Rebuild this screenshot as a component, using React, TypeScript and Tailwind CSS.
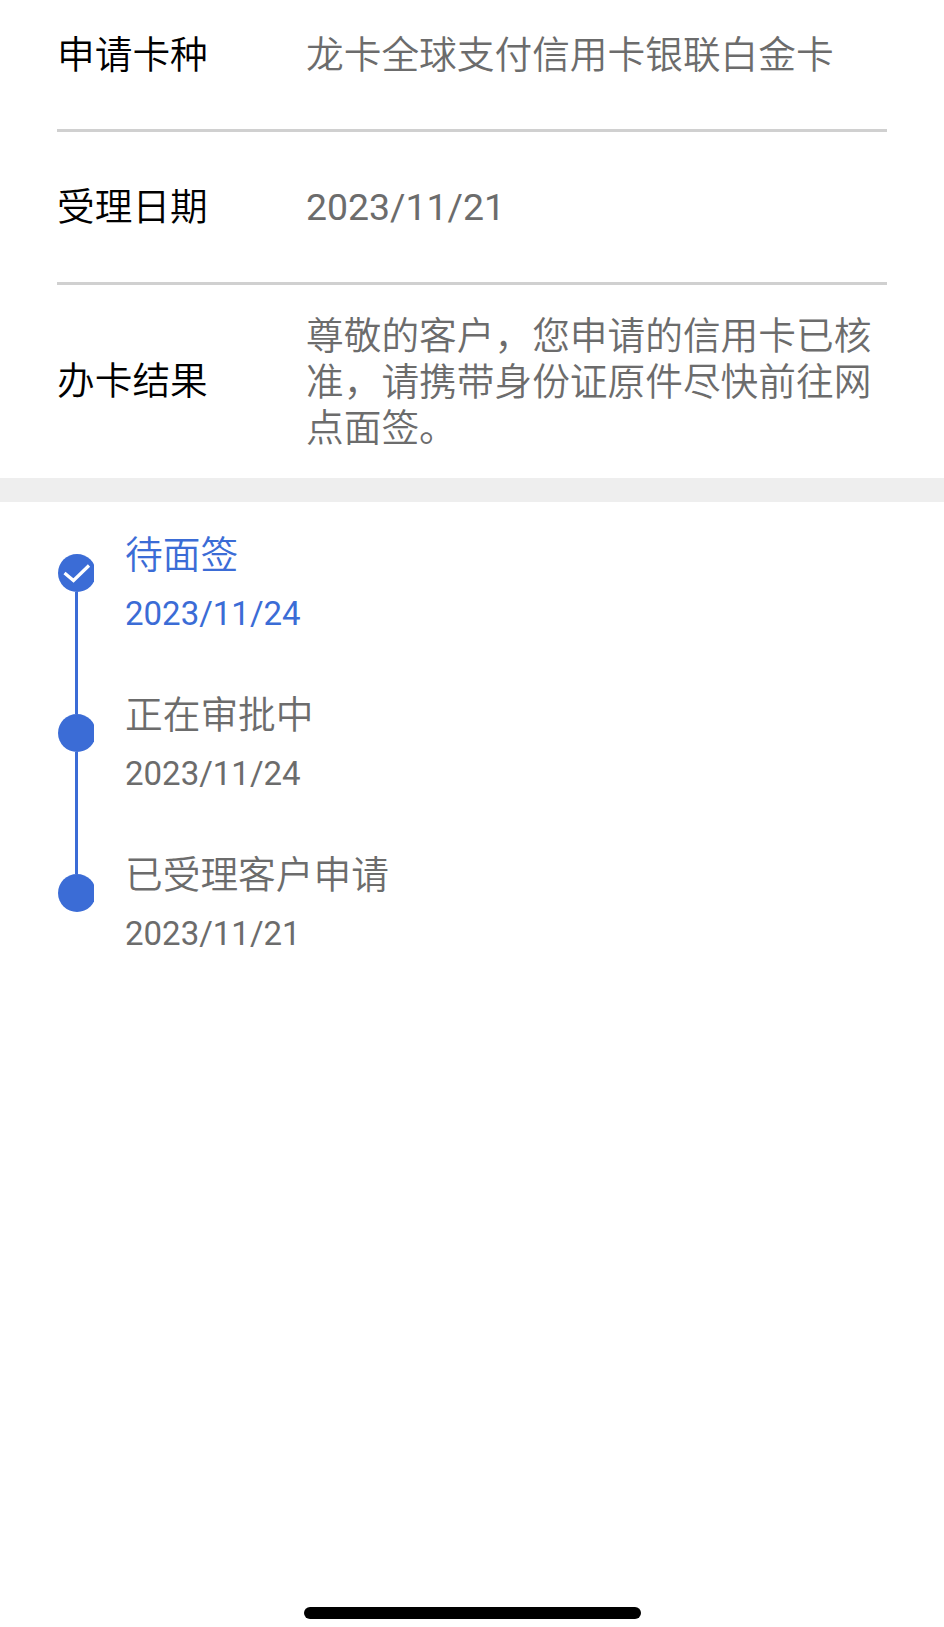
const sans = "font-['Roboto','Noto_Sans_CJK_SC',sans-serif]";

const steps = [
  { title: "待面签", date: "2023/11/24", active: true },
  { title: "正在审批中", date: "2023/11/24", active: false },
  { title: "已受理客户申请", date: "2023/11/21", active: false },
];

const Dot = ({ checked }: { checked: boolean }) => (
  <div className="w-[36px] h-[38px] overflow-hidden shrink-0">
    <div className="w-[38px] h-[38px] rounded-full bg-[#3b6cd6]">
      {checked && (
        <svg width="38" height="38" viewBox="0 0 38 38" fill="none">
          <path d="M6.5 19L15.5 26.5L31 11.5" stroke="#fff" strokeWidth="3.2" />
        </svg>
      )}
    </div>
  </div>
);

export default function App() {
  return (
    <div className={`${sans} flex flex-col h-[1627px] bg-white font-[350] overflow-hidden`}>
      <div className="mx-[57px] h-[129px] pb-[19px] flex items-center">
        <div className="w-[249px] shrink-0 text-[37.7px] text-black">申请卡种</div>
        <div className="text-[37.7px] text-[#6c6c6c] whitespace-nowrap">龙卡全球支付信用卡银联白金卡</div>
      </div>
      <div className="mx-[57px] h-[3px] bg-[#d0d0d0]" />
      <div className="mx-[57px] h-[150px] flex items-center">
        <div className="w-[249px] shrink-0 text-[37.7px] text-black">受理日期</div>
        <div className="text-[37.4px] font-normal text-[#6c6c6c]">2023/11/21</div>
      </div>
      <div className="mx-[57px] h-[3px] bg-[#d0d0d0]" />
      <div className="mx-[57px] h-[193px] flex items-center">
        <div className="w-[249px] shrink-0 text-[37.7px] text-black">办卡结果</div>
        <div className="text-[37.7px] leading-[46px] text-[#6c6c6c]">
          尊敬的客户，您申请的信用卡已核准，请携带身份证原件尽快前往网点面签。
        </div>
      </div>
      <div className="h-[24px] bg-[#eeeeee]" />
      <div className="pt-[52px] pl-[58px]">
        {steps.map((step, i) => (
          <div key={step.title} className="flex h-[160px]">
            <div className="w-[36px] flex flex-col items-start shrink-0">
              <Dot checked={step.active} />
              {i < steps.length - 1 && <div className="w-[3px] flex-1 bg-[#3b6cd6] ml-[17px]" />}
            </div>
            <div className={`ml-[31px] -mt-[22px] ${step.active ? "text-[#3b6cd6]" : "text-[#6c6c6c]"}`}>
              <div className="text-[37.7px] leading-[46px]">{step.title}</div>
              <div className="text-[33px] font-normal leading-[40px] mt-[16px]">{step.date}</div>
            </div>
          </div>
        ))}
      </div>
      <div className="mt-auto mb-[8px] mx-auto w-[337px] h-[12px] rounded-full bg-black" />
    </div>
  );
}
